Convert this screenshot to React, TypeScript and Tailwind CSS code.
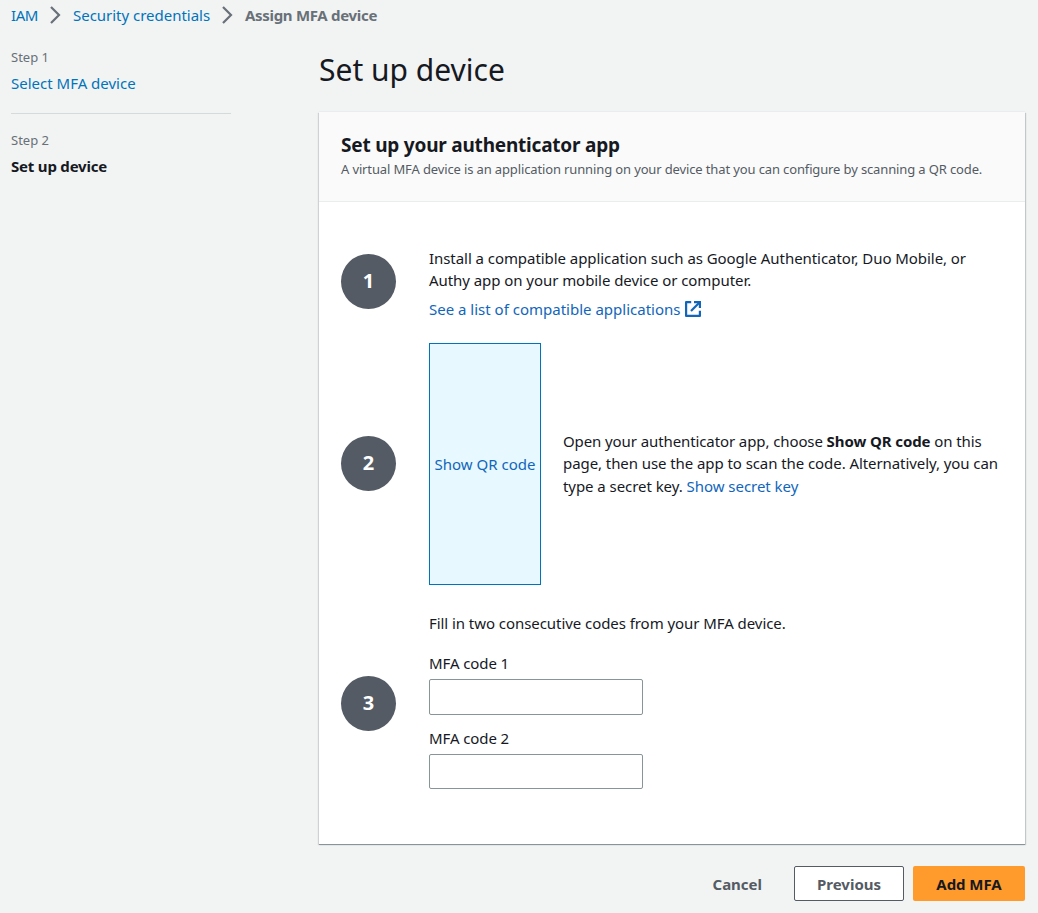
import type { ReactNode } from "react";

function Chevron() {
  return (
    <svg width="12" height="19" viewBox="0 0 12 19" fill="none" stroke="#687078" strokeWidth="2.2" className="shrink-0">
      <path d="M1 1 L9 9 L1 17" />
    </svg>
  );
}

function ExternalIcon() {
  return (
    <svg width="18" height="18" viewBox="0 0 18 18" fill="none" stroke="#1166bb" strokeWidth="2.2" className="shrink-0">
      <path d="M7.2 2.1 H2.1 V15.9 H15.9 V10.8" strokeLinejoin="round" />
      <path d="M10 2.1 H15.9 V8" />
      <path d="M15.7 2.3 L7 11" />
    </svg>
  );
}

function StepNumber({ children }: { children: ReactNode }) {
  return (
    <div className="flex size-[55px] shrink-0 items-center justify-center rounded-full bg-[#545b64] pb-px text-[20px] font-bold leading-none text-white">
      {children}
    </div>
  );
}

function CodeField({ id, label, height }: { id: string; label: string; height: string }) {
  return (
    <div className="flex flex-col">
      <label htmlFor={id} className="mb-[5px] h-[22px] leading-[22px] tracking-[-0.1px]">
        {label}
      </label>
      <input id={id} type="text" className={`w-[214px] rounded-xs border border-[#879596] bg-white px-2 outline-none ${height}`} />
    </div>
  );
}

export default function App() {
  return (
    <div className="flex h-[913px] w-full flex-col overflow-hidden bg-[#f2f3f3] font-['Noto_Sans','Open_Sans',sans-serif] text-[15px] leading-[22.5px] text-[#16191f]">
      <nav className="flex h-[30px] items-center whitespace-nowrap pl-[11px]">
        <a className="w-[27px] tracking-[-0.4px] text-[#0073bb]">IAM</a>
        <span className="ml-3 flex w-[23px]"><Chevron /></span>
        <a className="w-[137px] tracking-[-0.02px] text-[#0073bb]">Security credentials</a>
        <span className="ml-3 flex w-[23px]"><Chevron /></span>
        <span className="font-bold tracking-[-0.31px] text-[#687078]">Assign MFA device</span>
      </nav>

      <div className="flex">
        <aside className="ml-[11px] w-[220px] shrink-0 whitespace-nowrap">
          <div className="h-[84px] border-b border-[#d5dbdb] pt-4">
            <div className="text-[13px] text-[#687078]">Step 1</div>
            <a className="mt-[3px] block text-[#0073bb]">Select MFA device</a>
          </div>
          <div className="pt-[15px]">
            <div className="text-[13px] text-[#687078]">Step 2</div>
            <div className="mt-[3px] font-bold tracking-[-0.2px]">Set up device</div>
          </div>
        </aside>

        <main className="ml-[88px] w-[706px] shrink-0 whitespace-nowrap">
          <h1 className="h-[82px] pt-5 text-[30px] leading-[40px]">Set up device</h1>

          <section className="h-[732px] bg-white shadow-[0_1px_0_0_#879596,1px_1px_1px_0_rgba(0,28,36,0.2),-1px_1px_1px_0_rgba(0,28,36,0.15),0_-1px_0_0_#eaeded]">
            <header className="h-[90px] border-b border-[#eaeded] bg-[#fafafa] px-[22px] pt-5">
              <h2 className="text-[19px] font-bold leading-[26px] tracking-[-0.21px]">Set up your authenticator app</h2>
              <p className="text-[13px] leading-[22px] tracking-[-0.132px] text-[#545b64]">
                A virtual MFA device is an application running on your device that you can configure by scanning a QR code.
              </p>
            </header>

            <div className="flex flex-col px-[22px] pt-[45px]">
              <div className="flex h-[96px] gap-[33px]">
                <div className="pt-[7px]"><StepNumber>1</StepNumber></div>
                <div>
                  <p className="leading-[22px] tracking-[-0.058px]">
                    Install a compatible application such as Google Authenticator, Duo Mobile, or
                    <br />
                    Authy app on your mobile device or computer.
                  </p>
                  <a className="mt-[7px] flex items-center gap-1 text-[#1166bb]">
                    See a list of compatible applications
                    <ExternalIcon />
                  </a>
                </div>
              </div>

              <div className="flex h-[242px] items-center">
                <div className="pb-0.5"><StepNumber>2</StepNumber></div>
                <button className="ml-[33px] h-[242px] w-[112px] border border-[#0073bb] bg-[#e7f8ff] text-[#1166bb]">Show QR code</button>
                <p className="ml-[22px] pb-px tracking-[-0.1px]">
                  Open your authenticator app, choose <b>Show QR code</b> on this
                  <br />
                  <span className="tracking-[-0.075px]">page, then use the app to scan the code. Alternatively, you can</span>
                  <br />
                  <span className="tracking-[-0.06px]">type a secret key. </span><a className="tracking-[-0.03px] text-[#1166bb]">Show secret key</a>
                </p>
              </div>

              <div className="mt-[27px] flex gap-[33px]">
                <div className="pt-[64px]"><StepNumber>3</StepNumber></div>
                <div>
                  <p className="tracking-[-0.06px]">Fill in two consecutive codes from your MFA device.</p>
                  <div className="mt-[17px] flex flex-col gap-3">
                    <CodeField id="code-1" label="MFA code 1" height="h-9" />
                    <CodeField id="code-2" label="MFA code 2" height="h-[35px]" />
                  </div>
                </div>
              </div>
            </div>
          </section>

          <footer className="mt-[22px] flex h-[35px] justify-end font-bold">
            <button className="mr-8 pt-0.5 tracking-[-0.01px] text-[#545b64]">Cancel</button>
            <button className="mr-[9px] w-[110px] rounded-xs border border-[#545b64] bg-white pt-0.5 text-[#545b64]">Previous</button>
            <button className="w-[112px] rounded-xs bg-[#ff9b2d] pt-0.5 tracking-[-0.05px]">Add MFA</button>
          </footer>
        </main>
      </div>
    </div>
  );
}
